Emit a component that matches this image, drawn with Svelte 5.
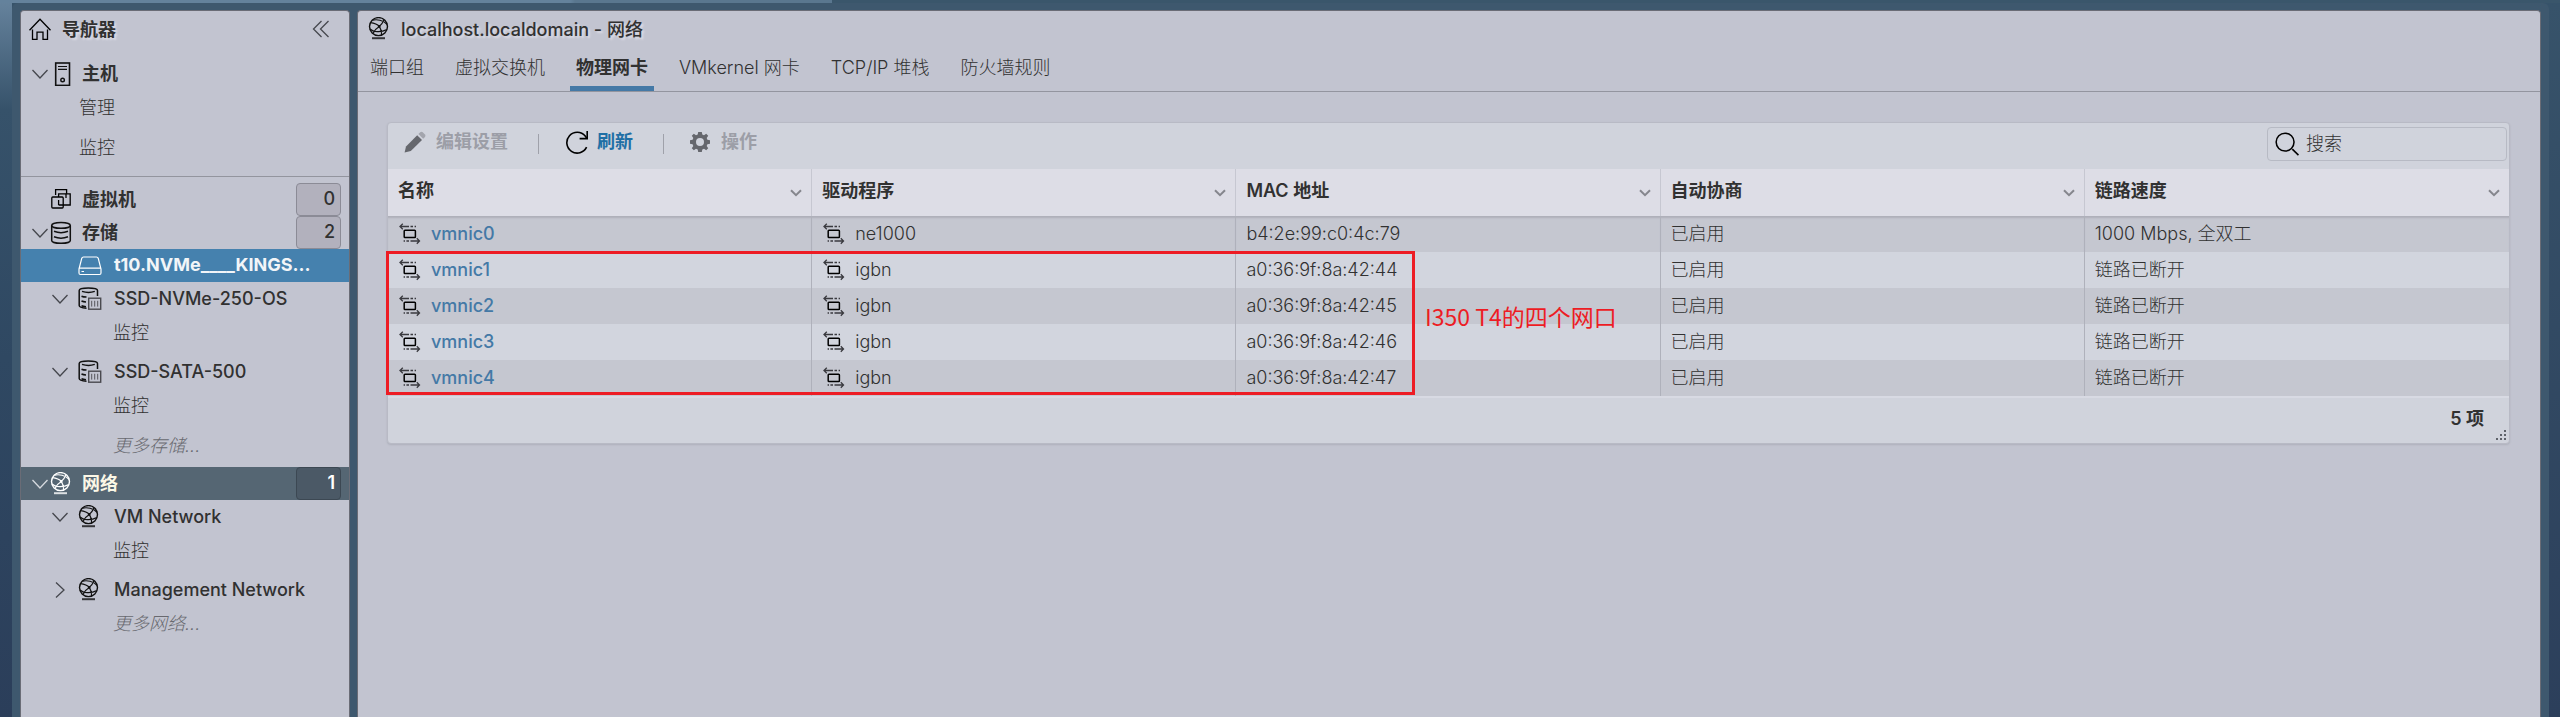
<script>
  const tabs = ['端口组', '虚拟交换机', '物理网卡', 'VMkernel 网卡', 'TCP/IP 堆栈', '防火墙规则'];
  const active = '物理网卡';
  const columns = ['名称', '驱动程序', 'MAC 地址', '自动协商', '链路速度'];
  const nics = [
    { name: 'vmnic0', driver: 'ne1000', mac: 'b4:2e:99:c0:4c:79', auto: '已启用', speed: '1000 Mbps, 全双工' },
    { name: 'vmnic1', driver: 'igbn', mac: 'a0:36:9f:8a:42:44', auto: '已启用', speed: '链路已断开' },
    { name: 'vmnic2', driver: 'igbn', mac: 'a0:36:9f:8a:42:45', auto: '已启用', speed: '链路已断开' },
    { name: 'vmnic3', driver: 'igbn', mac: 'a0:36:9f:8a:42:46', auto: '已启用', speed: '链路已断开' },
    { name: 'vmnic4', driver: 'igbn', mac: 'a0:36:9f:8a:42:47', auto: '已启用', speed: '链路已断开' }
  ];
</script>

{#snippet chevron(open)}
  <svg class="chev" viewBox="0 0 18 18" aria-hidden="true">
    {#if open}<path d="M1.5 5 L9 13 L16.5 5" />{:else}<path d="M5 1.5 L13 9 L5 16.5" />{/if}
  </svg>
{/snippet}

{#snippet globe()}
  <svg class="ico" viewBox="0 0 24 24" aria-hidden="true">
    <g fill="none" stroke="currentColor" stroke-width="1.2">
      <circle cx="10.5" cy="9.6" r="9" stroke-width="1.4" />
      <path d="M2.4 5.6 C5.5 6 9 6.8 11.3 9.4 M11.3 9.4 C13.6 7.4 15 5.4 16 2.6 M4.4 3.2 C9 2 15.5 3.2 19 7.4 M11.3 9.4 C8.6 11 6.4 13 5 16.4 M11.3 9.4 C13 12 13.8 14.6 13.6 18 M2 12 C5 15 13 15.6 18.8 12.6" />
      <path d="M4 21.2 H17" opacity=".8" stroke-width="2" />
    </g>
    <circle cx="11.2" cy="9.4" r="1.3" fill="currentColor" />
  </svg>
{/snippet}

{#snippet store()}
  <svg class="ico" viewBox="0 0 24 24" aria-hidden="true">
    <g fill="none" stroke="#111" stroke-width="1.5">
      <path d="M8.5 21.2 C4 21 1.2 20 1.2 18.6 V3.4 C1.2 2 5 1 10.2 1 S19.5 2 19.5 3.4 V9" />
      <path d="M4 4.4 C8 5.6 13 5.6 16.8 4.4 M3.5 9.2 C5 9.8 6.5 10 8.5 10.1 M3.5 14 C5 14.6 6 14.8 8 14.9 M3.5 18.8 C5 19.4 6 19.6 8 19.7" />
    </g>
    <rect x="10.7" y="11.2" width="12" height="11" fill="none" stroke="#4a4a4f" stroke-width="1.4" />
    <path d="M13.7 13.8 V19.6 M16.7 13.8 V19.6 M19.7 13.8 V19.6" stroke="#55555c" stroke-width="1" />
  </svg>
{/snippet}

{#snippet nicIcon()}
  <svg class="nic" viewBox="0 0 22 22" aria-hidden="true">
    <g fill="none" stroke="#3a3a3f" stroke-width="1.3">
      <path d="M1 3.5 H10 M3.8 .8 L1 3.5 L3.8 6.2 M11.5 3.5 H14 M15.6 3.5 H17" />
      <path d="M20.5 18 H11.5 M17.8 15.2 L20.5 18 L17.8 20.8 M10 18 H7.4 M6 18 H4.6" />
    </g>
    <rect x="5.2" y="7.2" width="11.2" height="7.4" rx=".8" fill="none" stroke="#000" stroke-width="1.5" />
  </svg>
{/snippet}

<div class="page">
  <div class="frame">
    <nav class="panel nav" aria-label="导航器">
      <header class="nav-head">
        <svg class="home" viewBox="0 0 24 24" fill="none" stroke="#000" stroke-width="1.3" aria-hidden="true">
          <path d="M1.5 13.2 L12 2.2 L22.5 13.2 M4.5 12.5 V22.3 H9 V15.2 H15 V22.3 H19.5 V12.5" />
        </svg>
        <h1>导航器</h1>
        <button class="collapse" aria-label="折叠">
          <svg viewBox="0 0 18 18" aria-hidden="true"><path d="M9.5 1 L1.5 9 L9.5 17 M16.5 1 L8.5 9 L16.5 17" /></svg>
        </button>
      </header>

      <section class="host">
        <a class="row top" href="#host">
          {@render chevron(true)}
          <svg class="ico" viewBox="0 0 24 24" fill="none" stroke="#111" aria-hidden="true">
            <rect x="5.7" y="1" width="13.8" height="22.4" stroke-width="1.6" />
            <path d="M8 4.5 H17 M8 7.3 H17" stroke-width="1.2" /><circle cx="12.6" cy="18" r="1.8" stroke-width="1.4" />
          </svg>
          <b>主机</b>
        </a>
        <a class="row leaf1" href="#manage">管理</a>
        <a class="row leaf1 spaced" href="#monitor">监控</a>
      </section>

      <a class="row top vms" href="#vms">
        <span class="chev"></span>
        <svg class="ico" viewBox="0 0 24 24" fill="none" stroke="#000" stroke-width="1.3" aria-hidden="true">
          <path d="M5.6 7 V1.6 H16.6 V5.8" /><path d="M8.6 9 V5.8 H20.2 V17 H8.6" /><path d="M16 5.8 V10" />
          <rect x="1.8" y="9" width="11.4" height="11" rx="1" /><path d="M8.6 12 V17" />
        </svg>
        <b>虚拟机</b><span class="badge">0</span>
      </a>
      <a class="row top storage" href="#storage">
        {@render chevron(true)}
        <svg class="ico" viewBox="0 0 24 24" fill="none" stroke="#111" stroke-width="1.5" aria-hidden="true">
          <ellipse cx="11" cy="4.4" rx="9.3" ry="2.9" />
          <path d="M1.7 4.4 V19.4 C1.7 21 5.8 22.3 11 22.3 S20.3 21 20.3 19.4 V4.4" />
          <path d="M4 10.3 C8 11.9 14 11.9 18 10.3 M4 15.8 C8 17.4 14 17.4 18 15.8" />
        </svg>
        <b>存储</b><span class="badge">2</span>
      </a>
      <a class="row sub selected" href="#nvme">
        <span class="chev"></span>
        <svg class="ico" viewBox="0 0 24 24" fill="none" stroke="#fff" stroke-width="1.2" aria-hidden="true">
          <path d="M1 15 L3.8 4.2 Q4.2 3 5.5 3 H18.5 Q19.8 3 20.2 4.2 L23 15 V19 Q23 20.5 21.5 20.5 H2.5 Q1 20.5 1 19 Z M1.5 14.2 H22.5 M3.5 17.5 H6" />
        </svg>
        <b>t10.NVMe____KINGS...</b>
      </a>
      <a class="row sub" href="#ssd1">{@render chevron(true)}{@render store()}<span>SSD-NVMe-250-OS</span></a>
      <a class="row leaf2" href="#mon1">监控</a>
      <a class="row sub spaced" href="#ssd2">{@render chevron(true)}{@render store()}<span>SSD-SATA-500</span></a>
      <a class="row leaf2" href="#mon2">监控</a>
      <a class="row leaf2 more spaced" href="#more1">更多存储...</a>
      <a class="row top current" href="#net">{@render chevron(true)}{@render globe()}<b>网络</b><span class="badge">1</span></a>
      <a class="row sub" href="#vmnet">{@render chevron(true)}{@render globe()}<span>VM Network</span></a>
      <a class="row leaf2" href="#mon3">监控</a>
      <a class="row sub spaced" href="#mgmt">{@render chevron(false)}{@render globe()}<span>Management Network</span></a>
      <a class="row leaf2 more" href="#more2">更多网络...</a>
    </nav>

    <main class="panel main">
      <header class="main-head">{@render globe()}<h2>localhost.localdomain - 网络</h2></header>
      <div class="tabs" role="tablist">
        {#each tabs as t}
          <button role="tab" aria-selected={t === active} class:on={t === active}>{t}</button>
        {/each}
      </div>

      <div class="card">
        <div class="toolbar">
          <button disabled>
            <svg class="pencil" viewBox="0 0 22 22" aria-hidden="true">
              <path d="M.6 21.4 L2 15.4 L13.2 4.2 L18 9 L6.8 20.1 Z" fill="#65676d" /><path d="M14.4 3 L16.2 1.2 Q17.5 .2 18.8 1.2 L21 3.4 Q22 4.6 21 5.9 L19.2 7.8 Z" fill="#a3a5ad" />
            </svg>编辑设置</button>
          <button class="go">
            <svg class="refresh" viewBox="0 0 24 24" fill="none" stroke="#000" stroke-width="1.6" aria-hidden="true">
              <path d="M21.6 17.2 A10.4 10.4 0 1 1 20.2 6 L21.8 8.2" /><path d="M22.2 1 V8.6 H14.6" />
            </svg>刷新</button>
          <button disabled>
            <svg class="gear" viewBox="0 0 20 20" aria-hidden="true">
              <path fill="#65676d" fill-rule="evenodd" d="M8.2 0 H11.8 L12.3 2.6 L14 3.3 L16.2 1.8 L18.2 3.8 L16.7 6 L17.4 7.7 L20 8.2 V11.8 L17.4 12.3 L16.7 14 L18.2 16.2 L16.2 18.2 L14 16.7 L12.3 17.4 L11.8 20 H8.2 L7.7 17.4 L6 16.7 L3.8 18.2 L1.8 16.2 L3.3 14 L2.6 12.3 L0 11.8 V8.2 L2.6 7.7 L3.3 6 L1.8 3.8 L3.8 1.8 L6 3.3 L7.7 2.6 Z M10 6 A4 4 0 1 0 10 14 A4 4 0 1 0 10 6 Z" />
            </svg>操作</button>
          <label class="search">
            <svg viewBox="0 0 26 26" fill="none" stroke="#000" stroke-width="1.6" aria-hidden="true">
              <circle cx="10.5" cy="10.5" r="9.3" /><path d="M18 17.8 L24.4 24" />
            </svg>
            <input type="text" placeholder="搜索" aria-label="搜索" />
          </label>
        </div>

        <div class="grid">
          <table>
            <thead>
              <tr>
                {#each columns as c}
                  <th><div>{c}<svg viewBox="0 0 12 8" aria-hidden="true"><path d="M1 1.2 L6 6.2 L11 1.2" /></svg></div></th>
                {/each}
              </tr>
            </thead>
            <tbody>
              {#each nics as n}
                <tr>
                  <td><div class="cell">{@render nicIcon()}<a href="#{n.name}">{n.name}</a></div></td>
                  <td><div class="cell">{@render nicIcon()}<span>{n.driver}</span></div></td>
                  <td>{n.mac}</td>
                  <td>{n.auto}</td>
                  <td>{n.speed}</td>
                </tr>
              {/each}
            </tbody>
          </table>
          <div class="mark"></div>
          <div class="note">I350 T4的四个网口</div>
        </div>

        <footer>
          5 项
          <svg class="grip" viewBox="0 0 10 10" fill="#5f626a" aria-hidden="true">
            <path d="M8 0h2v2h-2z M4 4h2v2h-2z M8 4h2v2h-2z M0 8h2v2h-2z M4 8h2v2h-2z M8 8h2v2h-2z" />
          </svg>
        </footer>
      </div>
    </main>
  </div>
</div>

<style>
  :global(body) { background: #2b3e5a; }
  .page {
    box-sizing: border-box;
    height: 100vh;
    padding: 3px 11px 0 12px;
    overflow: hidden;
    background: linear-gradient(90deg, #64829c 0 570px, #5a778f 575px 832px, #3a566b 832px) 0 0 / 100% 3px no-repeat,
      linear-gradient(#66839d 0, #36526a 110px, #2f4862 50%, #2b3e5a 100%) 0 0 / 12px 100% no-repeat,
      linear-gradient(#37536a, #2c3f5b) 0 0 / 100% 100%;
    font-family: Inter, "Noto Sans CJK SC", sans-serif;
    font-size: 18px;
    line-height: 33px;
    color: #313131;
  }
  .page * { box-sizing: border-box; }
  .frame { display: flex; gap: 7px; height: 100%; padding: 7px 8px 0; border-radius: 6px 6px 0 0; background: #3e586e; }
  .panel { background: #c2c4d0; border: 1px solid #6a6c76; border-bottom: 0; border-radius: 4px 4px 0 0; }
  .nav { flex: 0 0 330px; }
  .main { flex: 1; min-width: 0; }
  a { color: inherit; text-decoration: none; }
  button { padding: 0; border: 0; background: none; font: inherit; color: inherit; }
  h1, h2 { margin: 0; font-size: 18px; font-weight: 600; text-shadow: 2px 2px 2px #dcdce6; }
  h2 { font-weight: 500; }
  svg { flex: none; }

  .nav-head { display: flex; align-items: center; height: 36px; padding: 0 19px 0 7px; margin-bottom: 10px; }
  .home { width: 24px; height: 24px; margin-right: 10px; }
  .collapse { margin-left: auto; height: 24px; line-height: 0; }
  .collapse svg, .chev { width: 18px; height: 18px; fill: none; stroke: #45474d; stroke-width: 1.3; }

  .row { display: flex; align-items: center; height: 33px; }
  .chev { flex: none; margin-left: 10px; }
  .ico { width: 24px; height: 24px; color: #111; }
  .top .ico { margin: 0 8px 0 1px; }
  .sub { font-weight: 500; }
  .sub .chev { margin-left: 30px; }
  .sub .ico { margin: 0 12px 0 9px; }
  .row b { font-weight: 600; }
  .leaf1 { padding: 2px 0 0 58px; }
  .leaf2 { padding: 2px 0 0 92px; }
  .leaf1, .leaf2 { font-weight: 300; }
  .spaced { margin-top: 7px; }
  .more { font-style: italic; color: #68696f; margin-bottom: 6px; }
  .host { padding-bottom: 13px; border-bottom: 1px solid #93959e; margin-bottom: 6px; }
  .badge { width: 45px; height: 33px; margin: 0 8px 0 auto; padding-right: 5px; border: 1px solid #8b8b96; border-radius: 4px; background: #b2b1bd; text-align: right; font-weight: 500; line-height: 29px; }
  .selected { background: #4581ae; color: #f2f5f8; }
  .row.selected b { font-weight: 700; line-height: 29px; padding-bottom: 2px; }
  .current { background: #556673; color: #fbf7e6; }
  .current .ico { color: #fff; }
  .current .chev { stroke: #d5d9de; }
  .current .badge { background: #4b5966; border-color: #3c4853; color: #fff; font-weight: 600; }

  .main-head { display: flex; align-items: center; height: 36px; padding-left: 10px; }
  .main-head .ico { margin-right: 9px; }
  .tabs { display: flex; gap: 19px; height: 45px; padding-left: 6px; border-bottom: 1px solid #93959f; }
  .tabs button { padding: 0 6px; border-bottom: 5px solid transparent; font-weight: 300; line-height: 41px; white-space: nowrap; }
  .tabs .on { border-color: #4479a6; font-weight: 700; }

  .card { margin: 30px 30px 0 29px; border-radius: 4px; background: #d0d3dc; border: 1px solid #b8bac5; box-shadow: 0 1px 2px #aeb0bb; }
  .toolbar { display: flex; align-items: center; height: 46px; padding: 0 2px 4px 16px; }
  .toolbar button { display: flex; align-items: center; font-weight: 600; height: 38px; margin-bottom: 5px; }
  .toolbar button + button::before { content: ""; width: 1px; height: 20px; margin: 5px 26px 0 30px; background: #9fa1aa; }
  .toolbar button:disabled { color: #9c9ea7; }
  .toolbar .go { color: #1f6fa5; }
  .pencil { width: 22px; height: 22px; margin-right: 10px; }
  .refresh { width: 24px; height: 24px; margin-right: 8px; }
  .gear { width: 20px; height: 20px; margin-right: 11px; }
  .search { display: flex; align-items: center; width: 240px; height: 34px; margin-left: auto; padding-left: 7px; border: 1px solid #b7bac4; border-radius: 4px; }
  .search svg { width: 25px; height: 25px; margin-right: 6px; }
  .search input { flex: 1; min-width: 0; height: 30px; padding: 0 0 2px; border: 0; outline: 0; background: none; font: inherit; font-weight: 300; line-height: 24px; color: inherit; }
  .search input::placeholder { color: #313131; opacity: 1; }

  .grid { position: relative; }
  table { width: 100%; table-layout: fixed; border-collapse: separate; border-spacing: 0; }
  th, td { padding: 0 9px 0 10px; border-right: 1px solid #afb1bb; text-align: left; font-weight: 300; height: 36px; line-height: 24px; }
  th:last-child, td:last-child { border-right: 0; }
  th { height: 47px; padding-bottom: 3px; background: #dddde6; font-weight: 600; border-color: #c6c7d1; }
  th div { display: flex; align-items: center; justify-content: space-between; }
  th svg { width: 12px; height: 8px; margin-top: 4px; fill: none; stroke: #85868d; stroke-width: 2; }
  tbody tr { background: #d2d5de; }
  tbody tr:nth-child(odd) { background: #c5c7d0; }
  tbody tr:first-child td { box-shadow: inset 0 3px 2px -1px #aeafb9; }
  td { padding-bottom: 1px; }
  .cell { display: flex; align-items: center; }
  .cell a { color: #4479a6; font-weight: 500; }
  .nic { width: 22px; height: 22px; margin: 0 10px 0 1px; }
  .mark { position: absolute; left: -2px; top: 82px; width: 1029px; height: 144px; border: 3px solid #ed1c24; }
  .note { position: absolute; left: 1037px; top: 131px; font-family: "Noto Sans CJK SC", sans-serif; font-size: 23px; color: #ed1c24; white-space: nowrap; }
  footer { position: relative; height: 47px; padding-right: 25px; border-top: 2px solid #d8dae3; text-align: right; font-weight: 600; line-height: 42px; }
  .grip { position: absolute; right: 3px; bottom: 3px; width: 10px; height: 10px; }
</style>
